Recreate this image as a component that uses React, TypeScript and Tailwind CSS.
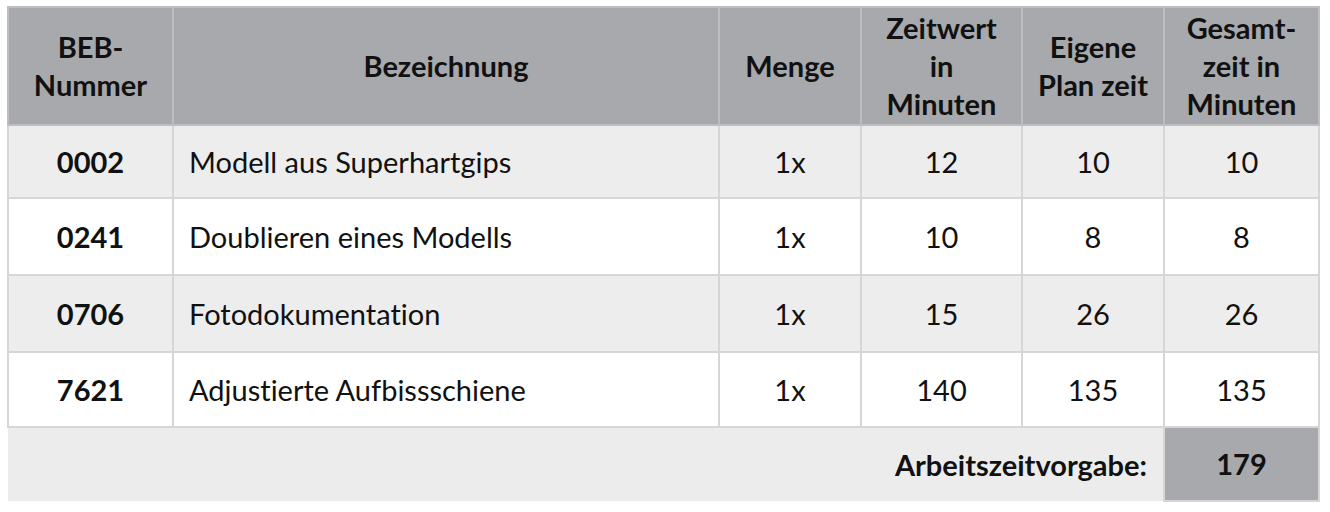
import React from 'react';

type Row = {
  nr: string;
  name: string;
  menge: string;
  zeitwert: string;
  plan: string;
  gesamt: string;
  rowClass: string;
};

const rows: Row[] = [
  {nr: '0002', name: 'Modell aus Superhartgips', menge: '1x', zeitwert: '12', plan: '10', gesamt: '10', rowClass: 'h-[73px] bg-[#ededed]'},
  {nr: '0241', name: 'Doublieren eines Modells', menge: '1x', zeitwert: '10', plan: '8', gesamt: '8', rowClass: 'h-[77px] bg-white'},
  {nr: '0706', name: 'Fotodokumentation', menge: '1x', zeitwert: '15', plan: '26', gesamt: '26', rowClass: 'h-[77px] bg-[#ededed]'},
  {nr: '7621', name: 'Adjustierte Aufbissschiene', menge: '1x', zeitwert: '140', plan: '135', gesamt: '135', rowClass: 'h-[75px] bg-white'},
];

const th = 'border-2 border-[#bcbec0] bg-[#a7a9ac] px-1 text-center align-middle font-bold';
const td = 'border-2 border-[#d6d6d6] text-center align-middle';

const App = () => {
  return (
    <div
      className="h-[512px] w-[1330px] bg-white pl-[7px] pt-[6px] text-[#111] text-[29px]"
      style={{fontFamily: 'Lato, "Open Sans", sans-serif', fontVariantLigatures: 'none'}}
    >
      <table className="table-fixed border-collapse leading-[38px]">
        <colgroup>
          <col className="w-[165px]" />
          <col className="w-[546px]" />
          <col className="w-[142px]" />
          <col className="w-[161px]" />
          <col className="w-[142px]" />
          <col className="w-[155px]" />
        </colgroup>
        <thead>
          <tr className="h-[118px]">
            <th className={th}>
              BEB-
              <br />
              Nummer
            </th>
            <th className={th}>Bezeichnung</th>
            <th className={th}>Menge</th>
            <th className={th}>
              Zeitwert
              <br />
              in
              <br />
              Minuten
            </th>
            <th className={th}>
              Eigene
              <br />
              Plan zeit
            </th>
            <th className={th}>
              Gesamt-
              <br />
              zeit in
              <br />
              Minuten
            </th>
          </tr>
        </thead>
        <tbody>
          {rows.map(row => (
            <tr key={row.nr} className={row.rowClass}>
              <td className={`${td} font-bold`}>{row.nr}</td>
              <td className={`${td} pl-[15px] text-left`}>{row.name}</td>
              <td className={td}>{row.menge}</td>
              <td className={td}>{row.zeitwert}</td>
              <td className={td}>{row.plan}</td>
              <td className={td}>{row.gesamt}</td>
            </tr>
          ))}
          <tr className="h-[74px] bg-[#ececec]">
            <td colSpan={5} className="pr-[16px] text-right align-middle font-bold">
              Arbeitszeitvorgabe:
            </td>
            <td className="border-2 border-[#d6d6d6] bg-[#a7a9ac] text-center align-middle font-bold">
              179
            </td>
          </tr>
        </tbody>
      </table>
    </div>
  );
};

export default App;
